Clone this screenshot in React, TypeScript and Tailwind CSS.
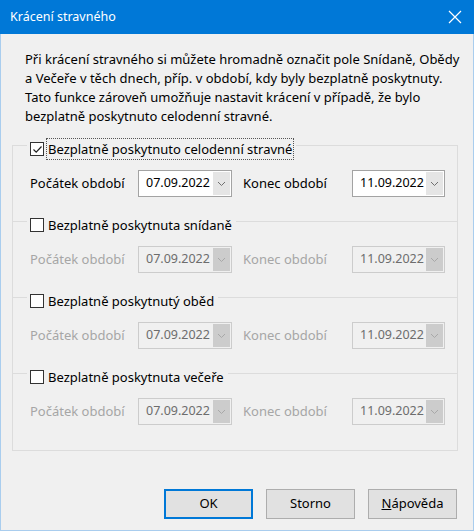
import React from "react";

const font = { fontFamily: '"Noto Sans", "Open Sans", sans-serif' };

type SectionProps = {
	label: string;
	checked?: boolean;
	last?: boolean;
};

const Chevron = ({ disabled }: { disabled?: boolean }) => (
	<svg width="9" height="6" viewBox="0 0 9 6" className="block">
		<path
			d="M1 1 L4.5 4.5 L8 1"
			fill="none"
			stroke={disabled ? "#a8a8a8" : "#707070"}
			strokeWidth="1"
		/>
	</svg>
);

const DateBox = ({
	value,
	disabled,
	width,
}: {
	value: string;
	disabled?: boolean;
	width: string;
}) => (
	<div
		className={`${width} h-[27px] flex items-stretch border p-[1px] ${
			disabled
				? "border-[#cccccc] bg-[#f0f0f0] text-[#6d6d6d]"
				: "border-[#a3a3a3] bg-white text-black"
		}`}
	>
		<div className="flex-1 flex items-center pl-[6px] text-[12.5px]">{value}</div>
		<div
			className={`w-[17px] flex items-center justify-center ${
				disabled ? "bg-[#cccccc]" : "bg-[#e5e5e5]"
			}`}
		>
			<Chevron disabled={disabled} />
		</div>
	</div>
);

const Checkbox = ({ checked }: { checked?: boolean }) => (
	<div className="w-[14px] h-[14px] border border-[#333333] bg-white flex items-center justify-center">
		{checked && (
			<svg width="11" height="11" viewBox="0 0 11 11">
				<path
					d="M1.5 5.5 L4.2 8.2 L9.5 2.5"
					fill="none"
					stroke="#222"
					strokeWidth="1.2"
				/>
			</svg>
		)}
	</div>
);

const Section = ({ label, checked, last }: SectionProps) => {
	const disabled = !checked;
	return (
		<div
			className={`border-t border-[#dcdcdc] ${last ? "pb-[25px]" : "pb-[24px]"}`}
		>
			<div className="-mt-[8px] h-[22px] flex">
				<div className="ml-[14px] px-[3px] bg-[#f0f0f0] flex items-center gap-[3px]">
					<Checkbox checked={checked} />
					<span
						className={`text-[13px] text-black leading-[20px] px-[1px] whitespace-nowrap ${
							checked ? "outline outline-1 outline-dotted outline-[#555]" : ""
						}`}
					>
						{label}
					</span>
				</div>
			</div>
			<div className="mt-[10px] flex items-center h-[27px] pl-[17px] text-[13px] whitespace-nowrap">
				<span className={`w-[108px] ${disabled ? "text-[#a6a6a6]" : "text-black"}`}>
					Počátek období
				</span>
				<DateBox value="07.09.2022" disabled={disabled} width="w-[94px]" />
				<span
					className={`ml-[11px] w-[109px] ${
						disabled ? "text-[#a6a6a6]" : "text-black"
					}`}
				>
					Konec období
				</span>
				<DateBox value="11.09.2022" disabled={disabled} width="w-[93px]" />
			</div>
		</div>
	);
};

const Button = ({
	children,
	primary,
}: {
	children: React.ReactNode;
	primary?: boolean;
}) => (
	<button
		className={`w-[89px] h-[30px] bg-[#e1e1e1] text-[13px] text-black flex items-center justify-center ${
			primary ? "border-2 border-[#0078d7]" : "border border-[#adadad]"
		}`}
	>
		{children}
	</button>
);

export default function App() {
	return (
		<div
			className="w-[474px] h-[531px] flex flex-col bg-[#f0f0f0] border-x border-b border-[#a9cdee]"
			style={font}
		>
			<div className="h-[34px] shrink-0 bg-[#0078d7] flex items-center justify-between pl-[10px] pr-[12px] -mx-[1px]">
				<span className="text-white text-[12.5px]">Krácení stravného</span>
				<svg width="14" height="14" viewBox="0 0 14 14">
					<path d="M1 1 L13 13 M13 1 L1 13" stroke="#fff" strokeWidth="1.2" />
				</svg>
			</div>

			<div className="pt-[16px] pl-[24px] text-[13px] leading-[19px] text-black whitespace-nowrap">
				<p>Při krácení stravného si můžete hromadně označit pole Snídaně, Obědy</p>
				<p>a Večeře v těch dnech, příp. v období, kdy byly bezplatně poskytnuty.</p>
				<p>Tato funkce zároveň umožňuje nastavit krácení v případě, že bylo</p>
				<p>bezplatně poskytnuto celodenní stravné.</p>
			</div>

			<div className="mt-[19px] ml-[11px] w-[446px] border-x border-b border-[#dcdcdc]">
				<Section label="Bezplatně poskytnuto celodenní stravné" checked />
				<Section label="Bezplatně poskytnuta snídaně" />
				<Section label="Bezplatně poskytnutý oběd" />
				<Section label="Bezplatně poskytnuta večeře" last />
			</div>

			<div className="mt-[38px] flex justify-end gap-[13px] pr-[16px]">
				<Button primary>OK</Button>
				<Button>Storno</Button>
				<Button>
					<span>
						<span className="underline">N</span>ápověda
					</span>
				</Button>
			</div>
		</div>
	);
}
